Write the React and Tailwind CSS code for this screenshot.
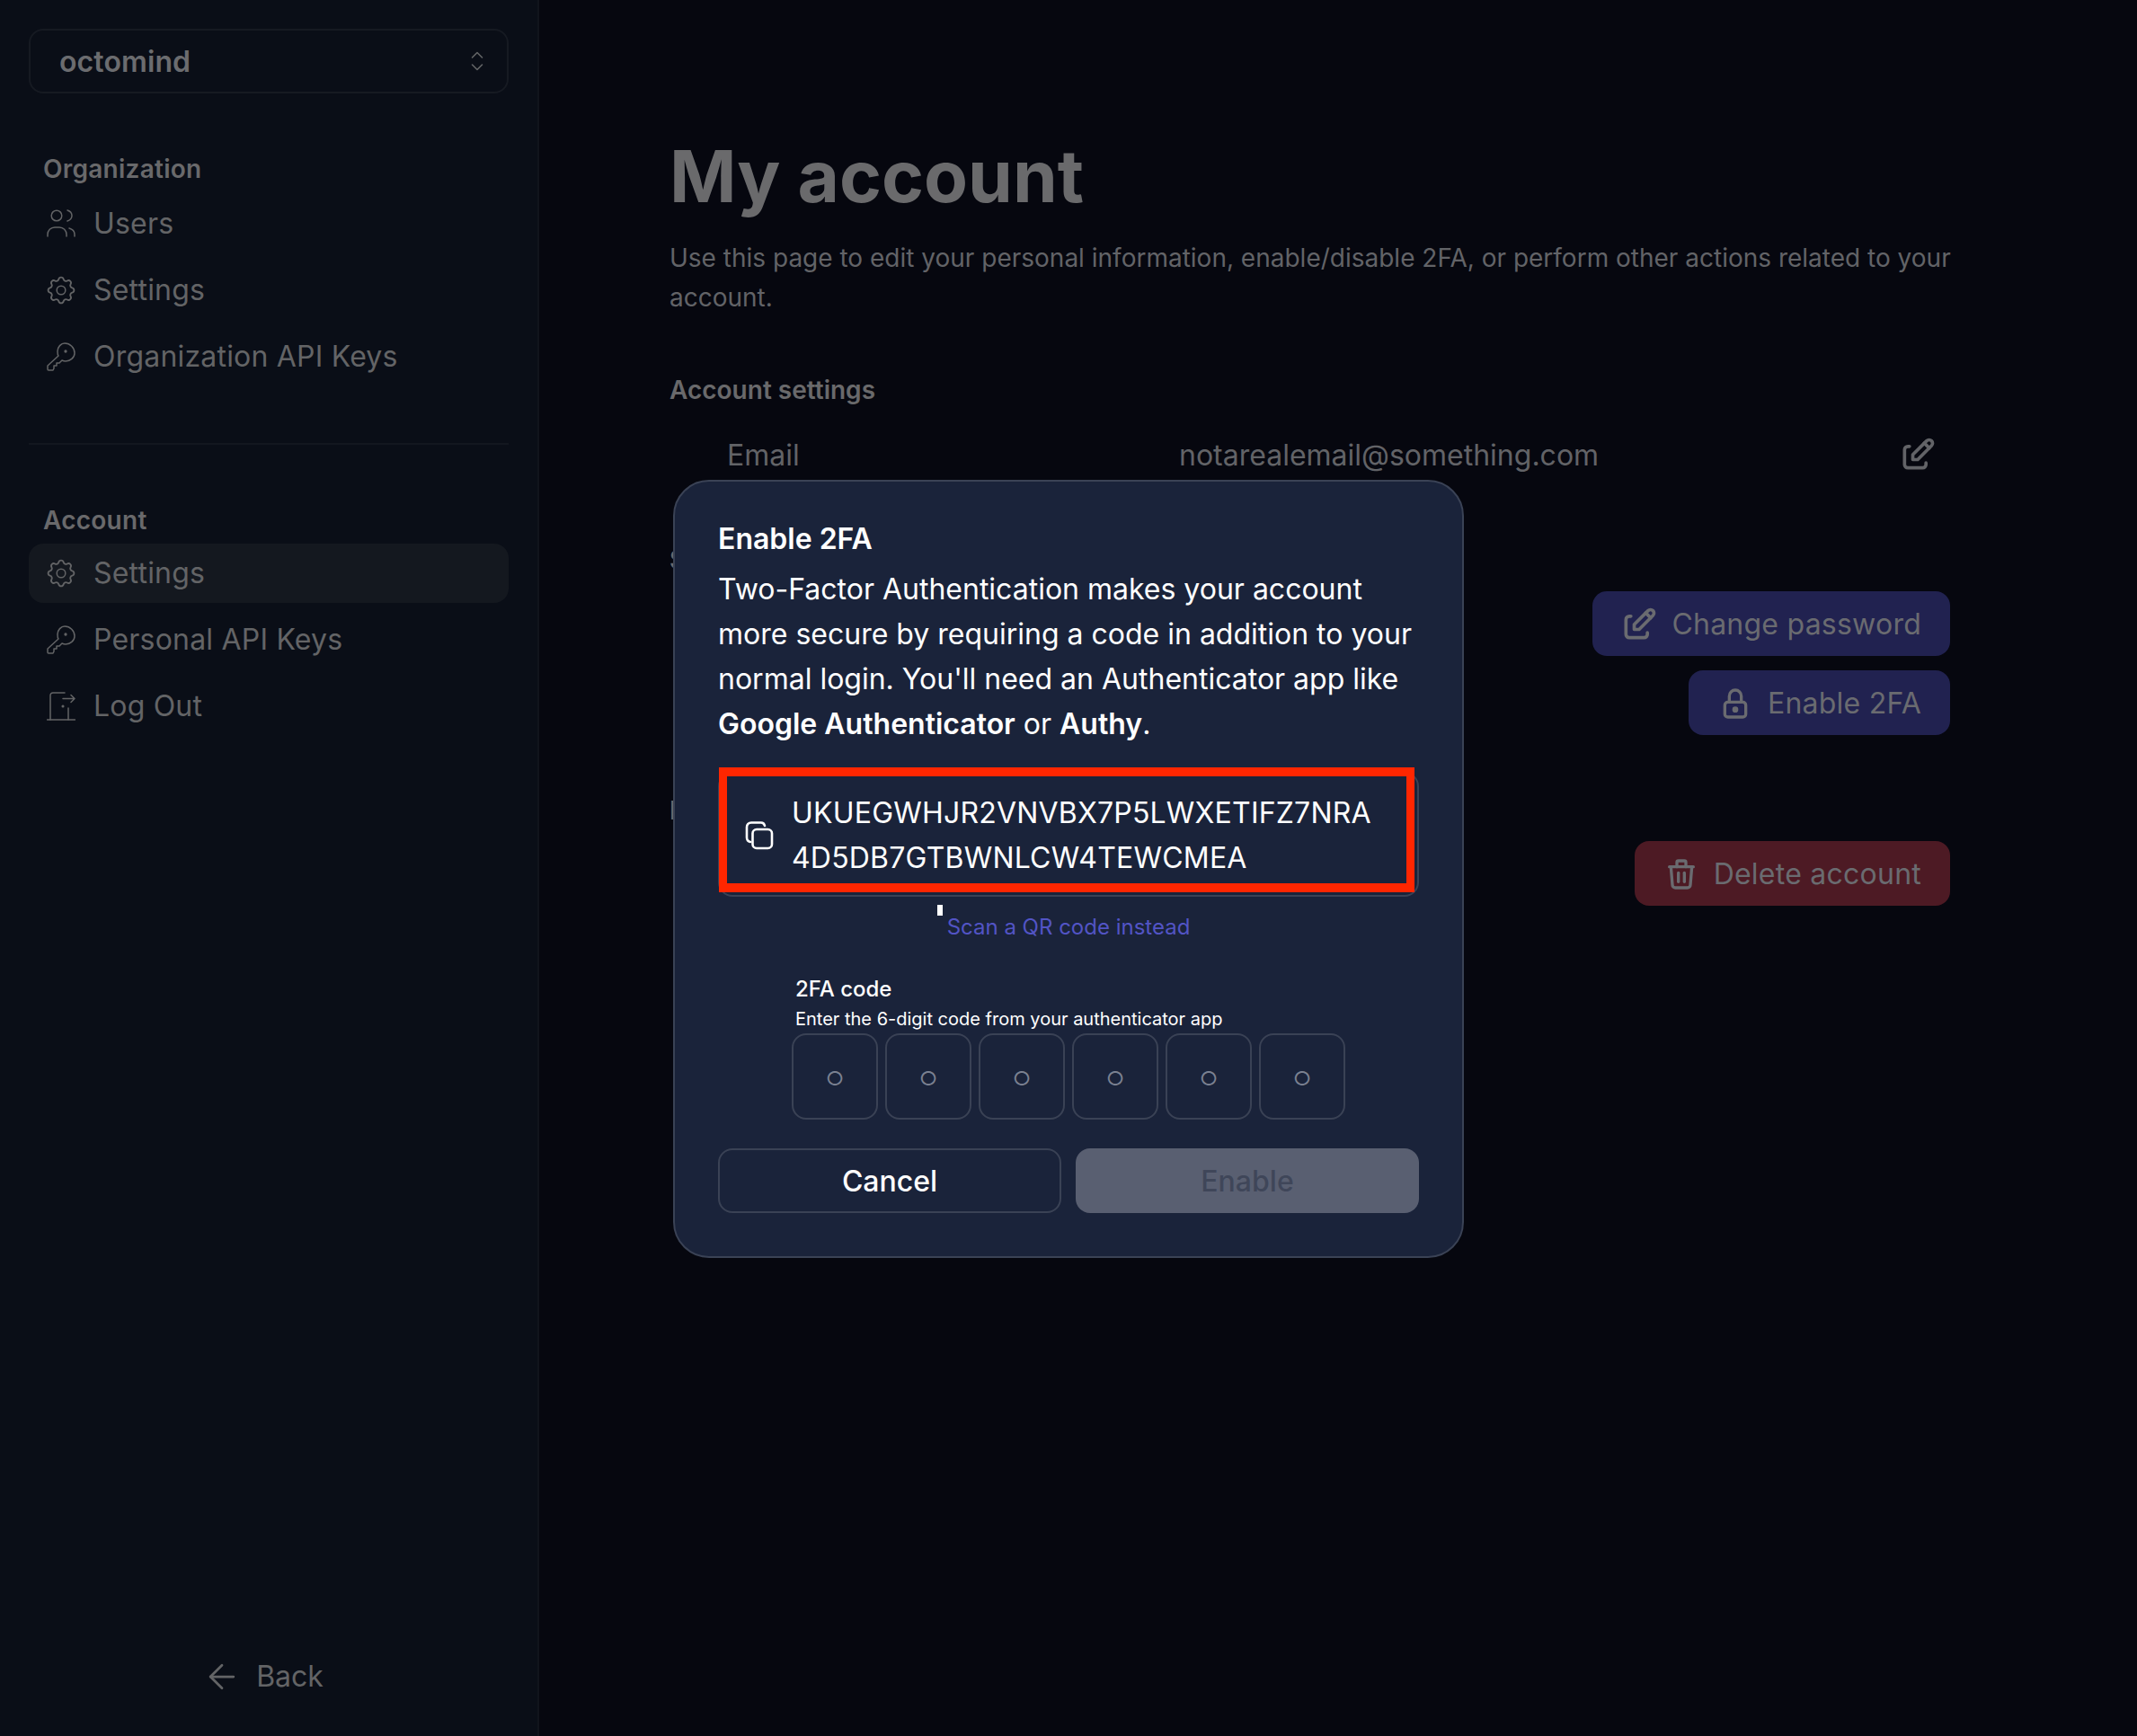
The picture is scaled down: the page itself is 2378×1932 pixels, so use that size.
import React from "react";
import { TbEdit, TbLock, TbTrash } from "react-icons/tb";
import { ArrowLeft } from "lucide-react";

const Users = () => (
  <svg viewBox="0 0 32 32" className="w-8 h-8" fill="none" stroke="currentColor" strokeWidth="1.5" strokeLinecap="round">
    <circle cx="11" cy="7" r="5.800" />
    <path d="M23 1c3 1 5 3.500 5 6s-2 5-5 6" />
    <path d="M1 30v-2c0-4.500 3.500-8 8-8h5c4.500 0 8 3.500 8 8v2" />
    <path d="M25 21c3.500 1 6 3.500 6 7v2" />
  </svg>
);
const Gear = () => (
  <svg viewBox="0 0 24 24" className="w-8 h-8" fill="none" stroke="currentColor" strokeWidth="1.15" strokeLinecap="round" strokeLinejoin="round">
    <path d="M10.325 4.317c.426-1.756 2.924-1.756 3.35 0a1.724 1.724 0 0 0 2.573 1.066c1.543-.94 3.31.826 2.37 2.370a1.724 1.724 0 0 0 1.065 2.572c1.756.426 1.756 2.924 0 3.350a1.724 1.724 0 0 0-1.066 2.573c.94 1.543-.826 3.310-2.370 2.370a1.724 1.724 0 0 0-2.572 1.065c-.426 1.756-2.924 1.756-3.350 0a1.724 1.724 0 0 0-2.573-1.066c-1.543.94-3.310-.826-2.370-2.370a1.724 1.724 0 0 0-1.065-2.572c-1.756-.426-1.756-2.924 0-3.350a1.724 1.724 0 0 0 1.066-2.573c-.94-1.543.826-3.310 2.370-2.370 1 .608 2.296.070 2.572-1.065z" transform="translate(-2.4 -2.4) scale(1.2)" />
    <circle cx="12" cy="12" r="3.600" />
  </svg>
);
const Key = () => (
  <svg viewBox="0 0 32 32" className="w-8 h-8" fill="none" stroke="currentColor" strokeWidth="1.5" strokeLinecap="round" strokeLinejoin="round">
    <path d="M20 1c6 0 11 5 11 11 0 5-5 9-10 9-1.500 0-3-.5-4-1l-3 3h-3v3H8v3l-1 2H2c-1 0-1-1-1-1v-4L13 15c-1-1-1-3-1-5 0-5 4-9 8-9z" />
    <circle cx="21" cy="10" r=".9" fill="currentColor" />
  </svg>
);
const Door = () => (
  <svg viewBox="0 0 32 32" className="w-8 h-8" fill="none" stroke="currentColor" strokeWidth="1.5" strokeLinecap="round" strokeLinejoin="round">
    <path d="M0.500 31h31" />
    <path d="M4 31V4c0-1.800 1.200-3 3-3h13" />
    <path d="M24 18v13" />
    <path d="M18 7.500h13M27 3.500l4 4-4 4" />
    <circle cx="18" cy="16" r=".8" fill="currentColor" />
  </svg>
);
const Copy = () => (
  <svg viewBox="0 0 32 32" className="w-8 h-8" fill="none" stroke="currentColor" strokeWidth="2.600" strokeLinecap="round" strokeLinejoin="round">
    <rect x="8.500" y="9" width="21.500" height="21" rx="4.500" />
    <path d="M22 5c-.5-2-2-3.500-4-3.500H7C4 1.500 2 3.500 2 6.500V18c0 2.500 1.500 4.500 4 5" />
  </svg>
);
const Chevrons = () => (
  <svg viewBox="0 0 14 24" className="w-[14px] h-6" fill="none" stroke="currentColor" strokeWidth="1.600" strokeLinecap="round" strokeLinejoin="round">
    <path d="M1.500 8 7 2.500 12.500 8M1.500 16 7 21.500 12.500 16" />
  </svg>
);

function NavItem({ icon, label, active }) {
  return (
    <div className={"flex h-[66px] items-center gap-5 rounded-2xl pl-[20px] pr-4 tracking-[0.2px] " + (active ? "bg-[#14181f]" : "")}>
      {icon}
      <span>{label}</span>
    </div>
  );
}

function Sidebar() {
  return (
    <aside className="flex w-[600px] shrink-0 flex-col border-r-2 border-[#11141c] bg-[#0a0e17] px-8 pt-8 pb-[42px] text-[32px] text-[#636466]">
      <div className="flex h-[72px] items-center justify-between rounded-2xl border-2 border-[#161a22] pl-[32px] pr-[26px]">
        <span className="pt-[2px] font-semibold tracking-[0.1px] text-[#6b6c6f]">octomind</span>
        <Chevrons />
      </div>
      <div className="mt-[63px] pl-4 text-[28px] font-semibold leading-[42px] tracking-[0.25px] text-[#69696b]">Organization</div>
      <nav className="mt-[7px] flex flex-col gap-2">
        <NavItem icon={<Users />} label="Users" />
        <NavItem icon={<Gear />} label="Settings" />
        <NavItem icon={<Key />} label="Organization API Keys" />
      </nav>
      <div className="mt-[63px] h-[2px] bg-[#13171f]" />
      <div className="mt-[63px] pl-4 text-[28px] font-semibold leading-[42px] tracking-[0.25px] text-[#69696b]">Account</div>
      <nav className="mt-[5px] flex flex-col gap-2">
        <NavItem icon={<Gear />} label="Settings" active />
        <NavItem icon={<Key />} label="Personal API Keys" />
        <NavItem icon={<Door />} label="Log Out" />
      </nav>
      <div className="mt-auto flex h-[48px] items-center justify-center gap-4 pr-[13px]">
        <ArrowLeft className="h-11 w-11" strokeWidth={1.500} />
        <span>Back</span>
      </div>
    </aside>
  );
}

function ActionButton({ icon, label, color }) {
  return (
    <div className={"flex h-[72px] items-center gap-4 rounded-2xl px-8 pt-[2px] text-[32px] text-[#6a6b70] " + color}>
      {icon}
      <span className="tracking-[0.24px]">{label}</span>
    </div>
  );
}

function Main() {
  return (
    <main className="min-w-0 flex-1 bg-[#06070f] pl-[145px] pr-[208px] pt-[142px] text-[#626367]">
      <h1 className="text-[80px] leading-[108px] font-bold text-[#6a6a6c]">My account</h1>
      <p className="mt-[15px] w-[1432px] text-[28px] leading-[44px]">
        Use this page to edit your personal information, enable/disable 2FA, or perform other actions related to your account.
      </p>
      <h2 className="mt-[59px] text-[28px] leading-[44px] font-semibold text-[#69696b]">Account settings</h2>
      <div className="mt-[27px] flex h-[48px] items-center pl-[64px] pr-[16px] text-[32px]">
        <span className="w-[503px]">Email</span>
        <span className="flex-1">notarealemail@something.com</span>
        <TbEdit className="-mx-0.5 -mt-[3px] h-11 w-11" />
      </div>
      <h2 className="mt-[70px] text-[28px] leading-[44px] font-semibold text-[#69696b]">Security</h2>
      <div className="mt-[13px] flex flex-col items-end gap-4">
        <ActionButton icon={<TbEdit className="-mx-0.5 h-11 w-11" />} label="Change password" color="bg-[#212250]" />
        <ActionButton icon={<TbLock className="h-10 w-10" />} label="Enable 2FA" color="bg-[#212250]" />
      </div>
      <h2 className="mt-[62px] text-[28px] leading-[44px] font-semibold text-[#69696b]">Danger zone</h2>
      <div className="mt-[12px] flex justify-end">
        <ActionButton icon={<TbTrash className="h-10 w-10" />} label="Delete account" color="bg-[#4d1a24]" />
      </div>
    </main>
  );
}

function Modal() {
  return (
    <div className="absolute left-[749px] top-[534px] w-[880px] rounded-[40px] border-2 border-[#3a4255] bg-[#1a233a] px-[48px] pt-[40px] pb-[48px] text-[32px] leading-[50px] text-white">
      <div className="font-semibold leading-[48px]">Enable 2FA</div>
      <p className="mt-[7px]">
        Two-Factor Authentication makes your account more secure by requiring a code in addition to your normal login. You'll need an Authenticator app like <b className="font-semibold">Google Authenticator</b> or <b className="font-semibold">Authy</b>.
      </p>
      <div className="relative mt-[28px] flex h-[139px] items-center gap-5 rounded-2xl border-2 border-[#3a4255] pl-[28px] pr-4 pt-[3px]">
        <Copy />
        <span className="w-[658px] break-all tracking-[0.2px]">UKUEGWHJR2VNVBX7P5LWXETIFZ7NRA4D5DB7GTBWNLCW4TEWCMEA</span>
      </div>
      <div className="mt-[16px] text-center text-[24px] leading-[36px] text-[#5254c5]">Scan a QR code instead</div>
      <div className="mt-[33px] flex flex-col items-center">
        <div className="w-[616px]">
          <div className="pl-[4px] text-[24px] leading-[36px] font-medium">2FA code</div>
          <div className="pl-[4px] text-[20px] leading-[30px]">Enter the 6-digit code from your authenticator app</div>
          <div className="mt-[1px] flex gap-2">
            {[0, 1, 2, 3, 4, 5].map((i) => (
              <div key={i} className="flex h-[96px] w-[96px] items-center justify-center rounded-2xl border-2 border-[#3a4255] pt-[3px] text-[22px] text-[#7b8191]">○</div>
            ))}
          </div>
        </div>
      </div>
      <div className="mt-[32px] grid grid-cols-2 gap-4">
        <div className="flex h-[72px] items-center justify-center rounded-2xl border-2 border-[#3a4255] pt-[2px] font-medium">Cancel</div>
        <div className="flex h-[72px] items-center justify-center rounded-2xl bg-[#595f71] pt-[2px] font-medium text-[#3f4659]">Enable</div>
      </div>
    </div>
  );
}

export default function App() {
  return (
    <div className="relative h-[1932px] w-[2378px] overflow-hidden font-['Inter',sans-serif]">
      <div className="flex h-full">
        <Sidebar />
        <Main />
      </div>
      <Modal />
      <div className="absolute left-[800px] top-[854px] h-[139px] w-[774px] border-x-[9px] border-y-[10px] border-[#ff2600]" />
      <div className="absolute left-[1043px] top-[1007px] h-[12px] w-[6px] bg-white" />
    </div>
  );
}
